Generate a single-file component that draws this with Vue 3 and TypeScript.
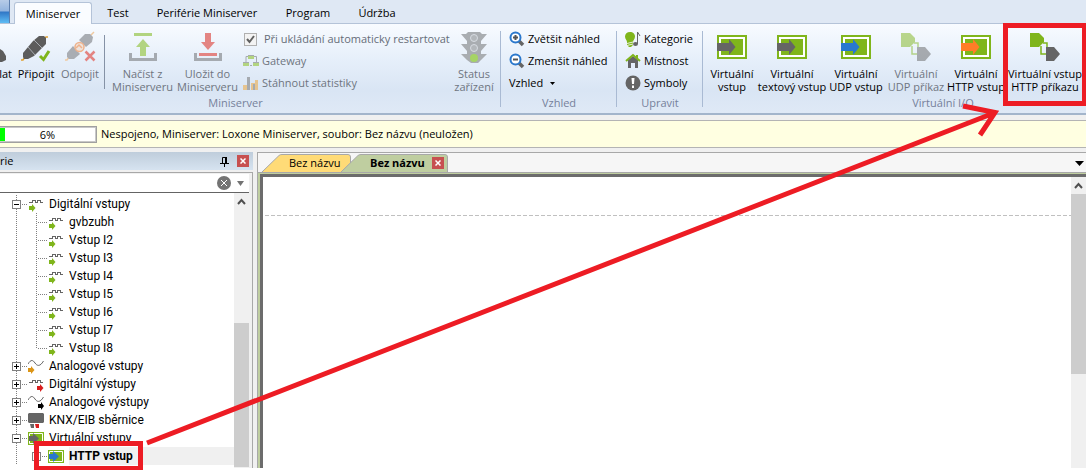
<script setup lang="ts">
import { ref } from 'vue'

interface TreeRow {
  label: string
  level: 1 | 2
  icon: string
  toggle?: 'plus' | 'minus'
  last?: boolean
  selected?: boolean
}

const menuTabs = [
  { label: 'Miniserver', cls: 'w-mini' },
  { label: 'Test', cls: 'w-test' },
  { label: 'Periférie Miniserver', cls: 'w-peri' },
  { label: 'Program', cls: 'w-prog' },
  { label: 'Údržba', cls: 'w-udrz' },
]
const activeTab = ref(0)
const restart = ref(true)
const query = ref('')
const progress = 6

const ioButtons = [
  { lines: ['Virtuální', 'vstup'], icon: 'in', color: '#656565', cls: 'w52' },
  { lines: ['Virtuální', 'textový vstup'], icon: 'in', color: '#656565', cls: 'w68' },
  { lines: ['Virtuální', 'UDP vstup'], icon: 'in', color: '#2878d0', cls: 'w60' },
  { lines: ['Virtuální', 'UDP příkaz'], icon: 'cmd', color: '', cls: 'w60', disabled: true },
  { lines: ['Virtuální', 'HTTP vstup'], icon: 'in', color: '#ff7d27', cls: 'w60' },
  { lines: ['Virtuální vstup', 'HTTP příkazu'], icon: 'cmd', color: '', cls: 'w78' },
]

const rows: TreeRow[] = [
  { label: 'Digitální vstupy', level: 1, icon: 'din', toggle: 'minus' },
  { label: 'gvbzubh', level: 2, icon: 'din' },
  { label: 'Vstup I2', level: 2, icon: 'din' },
  { label: 'Vstup I3', level: 2, icon: 'din' },
  { label: 'Vstup I4', level: 2, icon: 'din' },
  { label: 'Vstup I5', level: 2, icon: 'din' },
  { label: 'Vstup I6', level: 2, icon: 'din' },
  { label: 'Vstup I7', level: 2, icon: 'din' },
  { label: 'Vstup I8', level: 2, icon: 'din', last: true },
  { label: 'Analogové vstupy', level: 1, icon: 'ain', toggle: 'plus' },
  { label: 'Digitální výstupy', level: 1, icon: 'dout', toggle: 'plus' },
  { label: 'Analogové výstupy', level: 1, icon: 'aout', toggle: 'plus' },
  { label: 'KNX/EIB sběrnice', level: 1, icon: 'knx', toggle: 'plus' },
  { label: 'Virtuální vstupy', level: 1, icon: 'vin', toggle: 'minus' },
  { label: 'HTTP vstup', level: 2, icon: 'http', toggle: 'plus', selected: true },
]
</script>

<template>
  <div class="app">
    <nav class="menu">
      <button class="orb" aria-label="Nabídka"></button>
      <button
        v-for="(t, i) in menuTabs"
        :key="t.label"
        class="menu-tab"
        :class="[t.cls, { active: i === activeTab }]"
        @click="activeTab = i"
      >{{ t.label }}</button>
    </nav>

    <div class="ribbon">
      <section class="group g-mini">
        <div class="tools">
          <button class="big w-lat">
            <svg width="14" height="32" viewBox="0 0 14 32"><path d="M2 18L5 20L8 25V29L4 31H2z" fill="#5c5c5c" /></svg>
            <span>lat</span>
          </button>
          <button class="big w44">
            <svg width="32" height="32" viewBox="0 0 32 32">
              <path d="M1 29H3L5 26M24 8L26 6H28" fill="none" stroke="#e0a030" stroke-width="1.500" />
              <path d="M3 22L13 10L19 5H24L26 7V13L14 25L8 28H4L3 26z" fill="#5c5c5c" />
              <path d="M8 16L15 24M14 9L22 17" stroke="#a8acb2" />
              <path d="M20 25L23.500 28.500L29 20" fill="none" stroke="#7fb51b" stroke-width="3" />
            </svg>
            <span>Připojit</span>
          </button>
          <button class="big w44" disabled>
            <svg width="32" height="32" viewBox="0 0 32 32">
              <path d="M1 29H3L5 26M26 5L28 3L30 1" fill="none" stroke="#efc9a0" stroke-width="1.500" />
              <path d="M3 22L9 15L16 23L10 28H5L3 26z" fill="#a9adb3" />
              <path d="M15 9L21 3H26L29 6L28 11L22 16z" fill="#a9adb3" />
              <circle cx="15.500" cy="16" r="4.500" fill="#eee3dc" stroke="#eeb28c" stroke-width="1.500" />
              <path d="M12 17L15 14L18 17" fill="none" stroke="#eeb28c" stroke-width="1.500" />
              <path d="M21.500 20.500L30.500 29.500M30.500 20.500L21.500 29.500" stroke="#e38482" stroke-width="2.500" />
            </svg>
            <span>Odpojit</span>
          </button>
          <i class="inner-sep"></i>
          <button class="big w65" disabled>
            <svg width="32" height="32" viewBox="0 0 32 32">
              <path d="M7 2H25V5H7z M16 8L23 16H19V25H13V16H9z" fill="#b2d480" />
              <path d="M3.500 22V28.500H28.500V22" fill="none" stroke="#a5aab0" stroke-width="3" />
            </svg>
            <span>Načíst z<br />Miniserveru</span>
          </button>
          <button class="big w65" disabled>
            <svg width="32" height="32" viewBox="0 0 32 32">
              <path d="M13 2H19V11H23L16 19L9 11H13z M7 22H25V25H7z" fill="#e38482" />
              <path d="M3.500 22V28.500H28.500V22" fill="none" stroke="#a5aab0" stroke-width="3" />
            </svg>
            <span>Uložit do<br />Miniserveru</span>
          </button>
          <div class="stack s-mini">
            <label class="check">
              <input v-model="restart" type="checkbox" />
              <svg class="tick" width="13" height="13" viewBox="0 0 13 13"><path d="M3 6L5.500 9L10 3" fill="none" stroke="#606060" stroke-width="2" /></svg>
              <span>Při ukládání automaticky restartovat</span>
            </label>
            <button class="small" disabled>
              <svg width="16" height="16" viewBox="0 0 16 16">
                <path d="M3 9V3.500H5M11 3.500H13.500V9M7 12.500H9" fill="none" stroke="#a5aab0" />
                <path d="M5 2H11V6H5z M0 9H6V13H0z M10 9H16V13H10z" fill="#b2d480" />
                <path d="M5 2H11V3H5z M0 9H6V10H0z M10 9H16V10H10z" fill="#a5aab0" />
              </svg>
              <span>Gateway</span>
            </button>
            <button class="small" disabled>
              <svg width="16" height="16" viewBox="0 0 16 16">
                <path d="M0 10H4V15H0z M8 8H12V15H8z M12 5H15V15H12z" fill="#e6c490" />
                <path d="M4 2H7V15H4z M10 9H12V15H10z" fill="#a5aab0" />
              </svg>
              <span>Stáhnout statistiky</span>
            </button>
          </div>
          <button class="big w50" disabled>
            <svg width="32" height="32" viewBox="0 0 32 32">
              <path d="M10 1H22L24 3H29L23 10V13H29L23 20V23H29L23 29L20 32H13L9 29L3 23H9V20L3 13H9V10L3 3H8z" fill="#a9adb1" />
              <g fill="#b3b7bb" stroke="#d7dce2"><circle cx="16" cy="7" r="3.500" /><circle cx="16" cy="17" r="3.500" /></g>
              <circle cx="16" cy="27" r="4" fill="#a6d465" />
            </svg>
            <span>Status<br />zařízení</span>
          </button>
        </div>
        <div class="caption">Miniserver</div>
      </section>

      <section class="group g-view">
        <div class="stack">
          <button v-for="z in ['Zvětšit náhled', 'Zmenšit náhled']" :key="z" class="small">
            <svg width="16" height="16" viewBox="0 0 16 16">
              <path d="M10 10L14 14" stroke="#656565" stroke-width="3.500" />
              <circle cx="6.500" cy="6.500" r="5" fill="#fff" stroke="#2b78cc" stroke-width="2" />
              <path :d="z === 'Zvětšit náhled' ? 'M4 6.500H9M6.500 4V9' : 'M4 6.500H9'" stroke="#555" stroke-width="2" />
            </svg>
            <span>{{ z }}</span>
          </button>
          <button class="small">
            <span>Vzhled</span>
            <svg class="drop" width="5" height="3" viewBox="0 0 5 3"><path d="M0 0H5L2.500 3z" /></svg>
          </button>
        </div>
        <div class="caption">Vzhled</div>
      </section>

      <section class="group g-edit">
        <div class="stack">
          <button class="small">
            <svg width="16" height="16" viewBox="0 0 16 16">
              <path d="M5 1C8 1 10 3 10 5.500C10 8 8 9 8 11V14L6 16H4L2 14V11C2 9 0 8 0 5.500C0 3 2 1 5 1z" fill="#7fb51b" />
              <path d="M2 12.500L8 11M2 14.500L8 13" stroke="#e8f0dc" />
              <path d="M12.500 13V1L15 5" fill="none" stroke="#656565" /><ellipse cx="10.500" cy="13" rx="2.500" ry="2" fill="#656565" />
            </svg>
            <span>Kategorie</span>
          </button>
          <button class="small">
            <svg width="16" height="16" viewBox="0 0 16 16">
              <path d="M3 7L8 3L13 7V15H10V10H6V15H3z" fill="#656565" />
              <path d="M1 8L8 2L15 8" fill="none" stroke="#7fb51b" stroke-width="2" /><path d="M11 2H13V6L11 4z" fill="#7fb51b" />
            </svg>
            <span>Místnost</span>
          </button>
          <button class="small">
            <svg width="16" height="16" viewBox="0 0 16 16">
              <circle cx="8" cy="8" r="7.500" fill="#656565" /><path d="M6.500 3H9.500L9 9H7z M7 10.500H9V13H7z" fill="#fff" />
            </svg>
            <span>Symboly</span>
          </button>
        </div>
        <div class="caption">Upravit</div>
      </section>

      <section class="group g-io">
        <div class="tools">
          <button v-for="b in ioButtons" :key="b.lines.join()" class="big" :class="b.cls" :disabled="b.disabled">
            <svg v-if="b.icon === 'in'" width="32" height="32" viewBox="0 0 32 32">
              <path d="M1 4H31V28H1z" fill="#7fb51b" />
              <path d="M3 6H29V26H3z" fill="#fff" />
              <path d="M5 8H27V24H5z" fill="#7fb51b" />
              <path d="M1 12H13V8L19.500 16L13 24V20H1z" :fill="b.color" />
            </svg>
            <svg v-else width="32" height="32" viewBox="0 0 32 32">
              <path d="M12 15V23H18M14 12H18V16" fill="none" stroke="#7fb51b" stroke-width="1.500" />
              <path d="M1 2H10L15 7V11L10 16H1z" fill="#7fb51b" />
              <path d="M17 16H25L31 23L25 30H17z" fill="#656565" />
            </svg>
            <span>{{ b.lines[0] }}<br />{{ b.lines[1] }}</span>
          </button>
        </div>
        <div class="caption">Virtuální I/O</div>
      </section>
    </div>

    <div class="status">
      <div class="progress" role="progressbar" :aria-valuenow="progress">
        <i class="fill" :style="{ width: progress + '%' }"></i>
        <span>{{ progress }}%</span>
      </div>
      <span>Nespojeno, Miniserver: Loxone Miniserver, soubor: Bez názvu (neuložen)</span>
    </div>

    <div class="work">
      <aside class="side">
        <header class="side-head">
          <span class="side-title">rie</span>
          <button class="pin" aria-label="Připnout">
            <svg width="9" height="11" viewBox="0 0 9 11"><path d="M2.500 7V1.500H6.500V7M0 7.500H9M4.500 8V11" fill="none" stroke="#000" /><path d="M5 1H7V7H5z" /></svg>
          </button>
          <button class="close" aria-label="Zavřít">
            <svg width="6" height="6" viewBox="0 0 6 6"><path d="M0.500 0.500L5.500 5.500M5.500 0.500L0.500 5.500" stroke="#fff" stroke-width="1.500" /></svg>
          </button>
        </header>
        <div class="side-box">
          <div class="search">
            <input v-model="query" type="text" aria-label="Hledat" />
            <button aria-label="Vymazat" @click="query = ''">
              <svg width="14" height="14" viewBox="0 0 14 14"><circle cx="7" cy="7" r="7" fill="#737373" /><path d="M4 4L10 10M10 4L4 10" stroke="#fff" /></svg>
            </button>
            <button aria-label="Možnosti">
              <svg width="7" height="5" viewBox="0 0 7 5"><path d="M0 0H7L3.500 5z" fill="#737373" /></svg>
            </button>
          </div>
          <div class="tree-wrap">
            <ul class="tree">
              <li v-for="r in rows" :key="r.label" class="row">
                <svg class="lines" :width="r.level === 1 ? 28 : 48" height="18" shape-rendering="crispEdges">
                  <g stroke="#808080" stroke-dasharray="1 1" fill="none">
                    <path d="M16.500 0V18" />
                    <path v-if="r.level === 1" d="M22 9.500H28" />
                    <path v-else d="M38 9.500H48" />
                    <path v-if="r.level === 2" :d="r.last || r.selected ? 'M36.500 0V9' : 'M36.500 0V18'" />
                  </g>
                  <g v-if="r.toggle" :transform="r.level === 1 ? 'translate(12 5)' : 'translate(32 5)'">
                    <path d="M0.500 0.500H8.500V8.500H0.500z" fill="#fff" stroke="#808080" />
                    <path :d="r.toggle === 'plus' ? 'M2 4.500H7M4.500 2V7' : 'M2 4.500H7'" stroke="#000" />
                  </g>
                </svg>
                <svg width="16" height="18" viewBox="0 0 16 18">
                  <path v-if="r.icon === 'din' || r.icon === 'dout'" d="M1 7.500H4.500V5.500H7.500V7.500H9.500V5.500H12.500V7.500H15" fill="none" stroke="#656565" shape-rendering="crispEdges" />
                  <path v-if="r.icon === 'ain' || r.icon === 'aout'" d="M0 7C3 2 5 3 7 6S12 10 15.500 4" fill="none" stroke="#656565" />
                  <path v-if="r.icon === 'din'" d="M1 11H4V9L7.500 13L4 17V15H1z" fill="#7fb51b" />
                  <path v-if="r.icon === 'ain'" d="M0 11H3V9L6.500 13L3 17V15H0z" fill="#dc9516" />
                  <path v-if="r.icon === 'dout'" d="M9 11H12V9L15.500 13L12 17V15H9z" fill="#d81e1e" />
                  <path v-if="r.icon === 'aout'" d="M10 11H13V9L16 13L13 17V15H10z" fill="#000" />
                  <template v-if="r.icon === 'knx'">
                    <path d="M1 2H15L16 3V11L15 12H1L0 11V3z" fill="#656565" />
                    <path d="M2 13H6V17H3z" fill="#656565" /><path d="M7 13H11V17H8z" fill="#d81e1e" />
                  </template>
                  <template v-if="r.icon === 'vin' || r.icon === 'http'">
                    <path d="M0 3H16V16H0z" fill="#7fb51b" />
                    <path d="M1.500 4.500H14.500V14.500H1.500z" fill="none" stroke="#fff" />
                    <path d="M1 7H5V4L11 9.500L5 15V12H1z" :fill="r.icon === 'vin' ? '#656565' : '#2b78cc'" />
                  </template>
                </svg>
                <span class="tlabel" :class="{ selected: r.selected }">{{ r.label }}</span>
              </li>
            </ul>
            <div class="scroll">
              <svg width="15" height="18" viewBox="0 0 15 18"><path d="M4 11L7.500 7L11 11" fill="none" stroke="#505050" stroke-width="2" /></svg>
              <i class="side-thumb"></i>
            </div>
          </div>
        </div>
      </aside>

      <main class="main">
        <div class="doc-tabs">
          <button class="doc first">
            <svg width="90" height="18" viewBox="0 0 90 18"><path d="M0 18L17 1.500Q18 0.500 20 0.500H86Q88.500 0.500 88.500 3V18" fill="#ffdb77" stroke="#a8a8a8" /></svg>
            <span>Bez názvu</span>
          </button>
          <div class="doc second">
            <svg width="108" height="18" viewBox="0 0 108 18"><path d="M0 18L17 1.500Q18 0.500 20 0.500H104Q106.500 0.500 106.500 3V18" fill="#bfcea0" stroke="#a8a8a8" /></svg>
            <button class="doc-name">Bez názvu</button>
            <button class="close" aria-label="Zavřít dokument">
              <svg width="6" height="6" viewBox="0 0 6 6"><path d="M0.500 0.500L5.500 5.500M5.500 0.500L0.500 5.500" stroke="#fff" stroke-width="1.500" /></svg>
            </button>
          </div>
          <button class="doc-menu" aria-label="Seznam dokumentů">
            <svg width="9" height="5" viewBox="0 0 9 5"><path d="M0 0H9L4.500 5z" /></svg>
          </button>
        </div>
        <div class="doc-frame">
          <div class="canvas">
            <svg class="dash" width="100%" height="1"><line x1="0" y1="0.500" x2="100%" y2="0.500" stroke="#c0c0c0" stroke-dasharray="4 2" /></svg>
          </div>
          <div class="scroll">
            <svg width="15" height="17" viewBox="0 0 15 17"><path d="M4 11L7.500 7L11 11" fill="none" stroke="#505050" stroke-width="2" /></svg>
            <i class="main-thumb"></i>
          </div>
        </div>
      </main>
    </div>

    <svg class="marks" width="1086" height="470" viewBox="0 0 1086 470" fill="none" stroke="#ed1c24" stroke-width="5">
      <path d="M1005.500 25.500H1084.500V103.500H1005.500z" />
      <path d="M36.500 443.500H140.500V468.500H36.500z" />
      <path d="M147 443L994 113M963 106L995 112.500L980 135" />
    </svg>
  </div>
</template>

<style>
body {
  margin: 0;
}
</style>

<style scoped>
.app {
  position: relative;
  display: flex;
  flex-direction: column;
  height: 100vh;
  overflow: hidden;
  background: #f0f0f0;
  color: #000;
  font: 11px/16px "Open Sans", "Noto Sans", sans-serif;
}
button {
  margin: 0;
  padding: 0;
  border: 0;
  background: none;
  color: inherit;
  font: inherit;
  white-space: nowrap;
}
svg {
  display: block;
  flex: none;
}
.menu {
  display: flex;
  flex: none;
  height: 24px;
  background: #dfe8f4;
  box-shadow: inset 0 -1px #b4c3d8;
}
.orb {
  width: 10px;
  height: 23px;
  margin-right: 4px;
  border-right: 1px solid #5d7fae;
  background: linear-gradient(#b7cce8 0, #92b4df 11px, #3077c6 12px, #5ebdf5 23px);
}
.menu-tab {
  height: 22px;
  margin-top: 2px;
  box-sizing: border-box;
}
.menu-tab.active {
  border: 1px solid #b4c3d8;
  border-bottom: 0;
  border-radius: 3px 3px 0 0;
  background: #fafcff;
}
.w-mini { width: 78px; }
.w-test { width: 52px; }
.w-peri { width: 126px; }
.w-prog { width: 76px; }
.w-udrz { width: 62px; }

.ribbon {
  display: flex;
  flex: none;
  height: 89px;
  overflow: hidden;
  border-bottom: 2px solid #a3b5cb;
  background: linear-gradient(#f8fbff, #e6effa 40%, #d9e5f4 75%, #dfe9f6);
}
.group {
  position: relative;
  display: flex;
  flex: none;
  flex-direction: column;
  box-sizing: border-box;
}
.group::after {
  content: "";
  position: absolute;
  right: 0;
  top: 7px;
  height: 76px;
  width: 1px;
  background: #a9bad3;
}
.g-mini { width: 531px; margin-left: -30px; }
.g-mini .tools { padding-left: 30px; }
.g-view { width: 116px; }
.g-view .stack { padding-left: 8px; }
.g-edit { width: 86px; }
.g-edit .stack { padding-left: 8px; }
.g-io { width: 480px; }
.g-io .tools { padding-left: 3px; }
.tools { display: flex; height: 71px; }
.caption {
  height: 16px;
  color: #76819b;
  text-align: center;
}
.big {
  display: flex;
  flex: none;
  flex-direction: column;
  align-items: center;
  padding-top: 7px;
  line-height: 13px;
}
.big span { margin-top: 4px; }
.big:disabled,
.small:disabled { color: #6f757f; }
.g-io .big:disabled svg { opacity: 0.5; }
.w-lat { width: 14px; align-items: flex-end; padding-right: 2px; box-sizing: border-box; }
.w44 { width: 44px; }
.w50 { width: 50px; }
.w52 { width: 52px; }
.w60 { width: 60px; }
.w65 { width: 65px; }
.w68 { width: 68px; }
.w78 { width: 78px; }
.inner-sep {
  width: 1px;
  height: 54px;
  margin: 11px 5px 0 2px;
  background: #8592a6;
}
.stack {
  display: flex;
  flex-direction: column;
  height: 71px;
  padding-top: 4px;
  box-sizing: border-box;
}
.s-mini { width: 206px; margin-left: 3px; }
.small,
.check {
  display: flex;
  align-items: center;
  gap: 3px;
  height: 22px;
}
.check {
  position: relative;
  gap: 7px;
  padding-left: 1px;
  color: #666d78;
  white-space: nowrap;
}
.check input {
  appearance: none;
  flex: none;
  width: 13px;
  height: 13px;
  margin: 0;
  border: 1px solid #b0b0b0;
  background: #f3f3f3;
}
.tick {
  position: absolute;
  left: 1px;
  pointer-events: none;
}
.check input:not(:checked) + .tick { display: none; }
.drop { margin-left: 4px; }

.status {
  display: flex;
  flex: none;
  align-items: center;
  gap: 4px;
  height: 26px;
  margin: 5px 0 4px;
  border-top: 1px solid #b4b4b4;
  border-bottom: 1px solid #b4b4b4;
  background: #ffffe1;
}
.progress {
  position: relative;
  width: 97px;
  height: 15px;
  margin-left: -2px;
  border: 1px solid #a0a0a0;
  outline: 1px solid #c8c8c8;
  outline-offset: -2px;
  background: #fff;
  line-height: 16px;
  text-align: center;
}
.progress .fill {
  position: absolute;
  left: 0;
  top: 1px;
  bottom: 1px;
  background: #00ff00;
}

.work {
  display: flex;
  flex: 1;
  min-height: 0;
  border-bottom: 2px solid #fff;
}
.side {
  display: flex;
  flex: none;
  flex-direction: column;
  width: 253px;
  margin-right: 4px;
}
.side-head {
  display: flex;
  align-items: center;
  height: 18px;
  margin-bottom: 2px;
  padding-right: 4px;
  background: linear-gradient(#bfcddb, #d6e3f0);
}
.side-title { flex: 1; line-height: 18px; }
.pin { margin-right: 8px; }
.close {
  display: grid;
  place-items: center;
  width: 12px;
  height: 12px;
  background: #c75050;
}
.side-box {
  display: flex;
  flex: 1;
  flex-direction: column;
  min-height: 0;
  border-top: 1px solid #a8a8a8;
  border-right: 1px solid #a8a8a8;
  padding: 1px 3px 0 0;
}
.search {
  display: flex;
  align-items: center;
  height: 18px;
  padding-right: 5px;
  border-bottom: 1px solid #646464;
  background: #fff;
}
.search input {
  flex: 1;
  min-width: 0;
  height: 16px;
  padding: 0 4px;
  border: 0;
  outline: 0;
  font: inherit;
}
.search button { margin-left: 6px; }
.tree-wrap {
  display: flex;
  flex: 1;
  min-height: 0;
  background: #fff;
}
.tree {
  flex: 1;
  min-width: 0;
  margin: 0;
  padding: 2px 0 0;
  overflow: hidden;
  font-family: Roboto, "Noto Sans", sans-serif;
  font-size: 12px;
  list-style: none;
}
.row {
  display: flex;
  height: 18px;
  line-height: 18px;
}
.tlabel {
  margin-left: 5px;
  white-space: nowrap;
}
.tlabel.selected {
  flex: 1;
  background: #f0f0f0;
  font-weight: bold;
}
.scroll {
  flex: none;
  width: 15px;
  background: #f0f0f0;
}
.scroll i {
  display: block;
  background: #cdcdcd;
}
.side-thumb { height: 144px; margin-top: 112px; }
.main-thumb { height: 180px; }

.main {
  display: flex;
  flex: 1;
  flex-direction: column;
  min-width: 0;
  border-top: 1px solid #a8a8a8;
  border-left: 1px solid #a8a8a8;
  background: #bfcea0;
}
.doc-tabs {
  display: flex;
  align-items: flex-end;
  height: 19px;
  padding-left: 4px;
  border-bottom: 1px solid #a8a8a8;
  background: #f6f6f6;
}
.doc {
  position: relative;
  display: flex;
  align-items: center;
  height: 18px;
}
.doc > svg:first-child {
  position: absolute;
  inset: 0;
}
.doc > span,
.doc > button { position: relative; }
.first { width: 79px; padding-left: 27px; }
.first, .second { box-sizing: border-box; }
.second { width: 108px; padding-left: 29px; }
.doc-name { flex: 1; font-weight: bold; text-align: left; }
.second .close { margin-right: 5px; }
.doc-menu {
  height: 18px;
  margin-left: auto;
  padding-right: 2px;
}
.doc-frame {
  display: flex;
  flex: 1;
  min-height: 0;
  margin: 1px 0 0 2px;
  border-top: 3px solid #6c6c6c;
  border-left: 3px solid #6c6c6c;
  background: #fff;
}
.canvas { flex: 1; }
.dash { margin: 38px 0 0 2px; }
.marks {
  position: absolute;
  left: 0;
  top: 0;
  pointer-events: none;
}
</style>
